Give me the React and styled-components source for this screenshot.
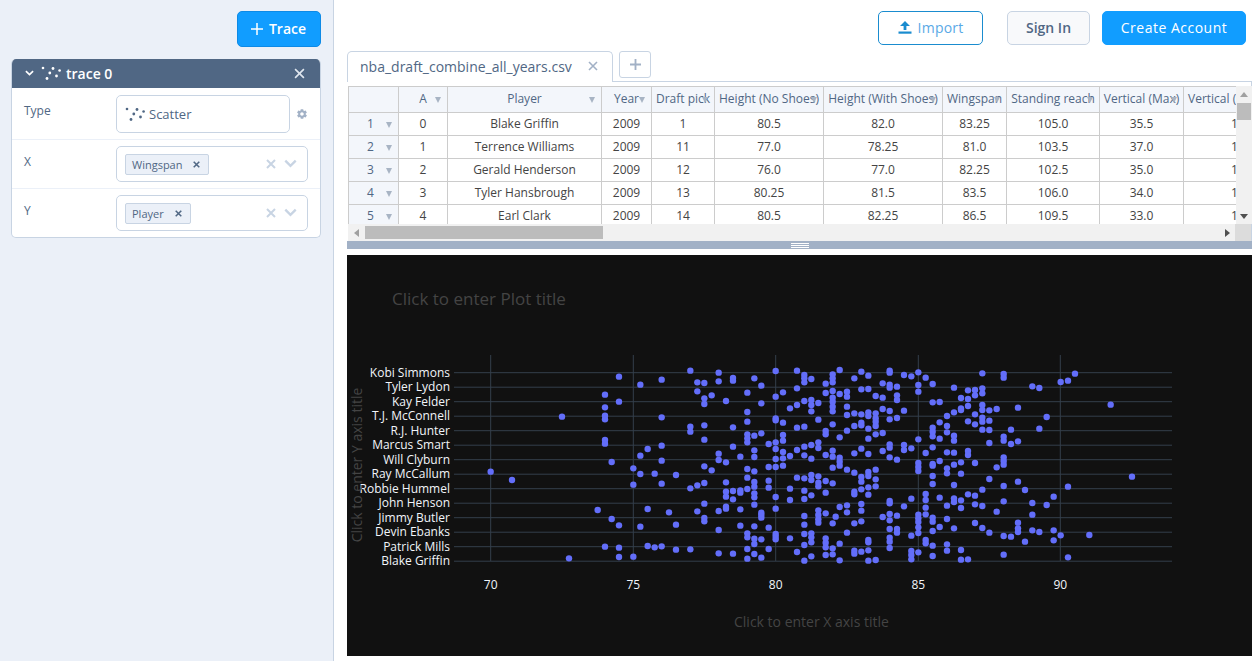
import React from "react"
import styled, { createGlobalStyle } from "styled-components"
import { IoMdSettings } from "react-icons/io"

const colors = {
  accent: "#119dff",
  slate: "#506784",
  line: "#c8d4e3",
  pale: "#ebf0f8",
  grid: "#ccc",
}

const GlobalStyle = createGlobalStyle`
  html, body {
    margin: 0;
    height: 100%;
    overflow: hidden;
    background: #fff;
    font-family: "Open Sans", "Liberation Sans", sans-serif;
  }
  * {
    box-sizing: border-box;
  }
`

const Page = styled.div`
  display: flex;
  height: 661px;
`

const Sidebar = styled.aside`
  width: 334px;
  flex: none;
  display: flex;
  flex-direction: column;
  align-items: stretch;
  padding: 11px 12px 0 11px;
  background: ${colors.pale};
  border-right: 1px solid ${colors.line};
`

const AddTrace = styled.button`
  align-self: flex-end;
  display: flex;
  align-items: center;
  justify-content: center;
  gap: 6px;
  width: 84px;
  height: 36px;
  padding: 0 1px 1px 0;
  color: #fff;
  font: 600 14px "Open Sans", sans-serif;
  background: ${colors.accent};
  border: 1px solid #0d8ae6;
  border-radius: 5px;
`

const Panel = styled.section`
  margin-top: 12px;
  background: #fff;
  border: 1px solid ${colors.line};
  border-top: 0;
  border-radius: 5px;
  overflow: hidden;
`

const PanelHead = styled.header`
  display: flex;
  align-items: center;
  height: 29px;
  margin: 0 -1px;
  padding: 0 16px 1px 14px;
  color: #fff;
  font-size: 14px;
  font-weight: 600;
  background: ${colors.slate};
`

const HeadIcon = styled.span`
  display: flex;
  margin-left: 7px;
`

const TraceName = styled.span`
  margin-left: 5px;
  flex: 1;
`

const Row = styled.div`
  display: flex;
  align-items: flex-start;
  height: ${props => props.$height}px;
  padding: ${props => props.$top}px 12px 0 12px;
  border-top: ${props => (props.$first ? "0" : `1px solid ${colors.pale}`)};
`

const Label = styled.label`
  width: 92px;
  flex: none;
  padding-top: ${props => props.$top}px;
  color: ${colors.slate};
  font-size: 12px;
`

const Field = styled.div`
  display: flex;
  align-items: center;
  flex: 1;
  height: ${props => props.$height}px;
  padding: 0 ${props => props.$right}px 0 8px;
  color: ${colors.slate};
  font-size: 13px;
  background: #fff;
  border: 1px solid ${colors.line};
  border-radius: 5px;
`

const TypeText = styled.span`
  margin-left: 4px;
`

const Gear = styled.span`
  display: flex;
  align-items: center;
  width: 18px;
  height: 38px;
  padding-left: 6px;
  color: #a2b1c6;
`

const Tag = styled.span`
  display: flex;
  align-items: center;
  height: 21px;
  padding: 0 8px 0 6px;
  gap: 11px;
  color: ${colors.slate};
  font-size: 11px;
  background: ${colors.pale};
  border: 1px solid ${colors.line};
  border-radius: 2px;
`

const Clear = styled.span`
  display: flex;
  align-items: center;
  gap: 8px;
  margin-left: auto;
`

const Main = styled.main`
  flex: 1;
  min-width: 0;
  display: flex;
  flex-direction: column;
  padding: 0 2px 0 13px;
`

const TopBar = styled.div`
  display: flex;
  justify-content: flex-end;
  height: 51px;
  padding: 11px 6px 0 0;
`

const TopButton = styled.button`
  display: flex;
  align-items: center;
  justify-content: center;
  gap: 6px;
  width: ${props => props.$width}px;
  height: 34px;
  margin-left: ${props => props.$gap}px;
  padding: 0 0 2px;
  font-family: "Open Sans", sans-serif;
  font-size: 14px;
  font-weight: ${props => (props.$kind === "plain" ? 600 : 400)};
  letter-spacing: ${props =>
    props.$kind === "solid" ? "0.5px" : props.$kind === "outline" ? "0.2px" : 0};
  border-radius: 5px;
  color: ${props =>
    props.$kind === "solid"
      ? "#fff"
      : props.$kind === "outline"
      ? "#5aa9e6"
      : colors.slate};
  background: ${props =>
    props.$kind === "solid"
      ? colors.accent
      : props.$kind === "plain"
      ? "#f8f9fb"
      : "#fff"};
  border: 1px solid
    ${props =>
      props.$kind === "plain"
        ? colors.line
        : props.$kind === "outline"
        ? "#1a8ccf"
        : colors.accent};
`

const TabRow = styled.div`
  display: flex;
  align-items: flex-start;
  height: 31px;
  border-bottom: 1px solid ${colors.line};
`

const Tab = styled.div`
  display: flex;
  align-items: center;
  justify-content: space-between;
  width: 266px;
  height: 31px;
  padding: 0 14px 2px 12px;
  color: ${colors.slate};
  font-size: 14px;
  background: #fff;
  border: 1px solid ${colors.line};
  border-bottom: 0;
  border-radius: 5px 5px 0 0;
`

const AddTab = styled.div`
  display: flex;
  align-items: center;
  justify-content: center;
  width: 32px;
  height: 27px;
  margin-left: 6px;
  background: #fff;
  border: 1px solid ${colors.line};
  border-radius: 3px;
`

const Sheet = styled.div`
  height: 159px;
  padding: 4px 0 0 1px;
  border-right: 1px solid ${colors.line};
  background: #fff;
`

const SheetTop = styled.div`
  display: flex;
  height: 138px;
`

const Viewport = styled.div`
  width: 888px;
  flex: none;
  overflow: hidden;
`

const Grid = styled.table`
  width: 888px;
  table-layout: fixed;
  border-collapse: collapse;
`

const Col = styled.col`
  width: ${props => props.$width}px;
`

const Th = styled.th`
  position: relative;
  height: 26px;
  padding: ${props => (props.$clip ? "0 0 2px 4px" : "0 0 2px")};
  overflow: hidden;
  color: ${colors.slate};
  font-size: 12px;
  font-weight: 400;
  text-align: ${props => (props.$clip ? "left" : "center")};
  white-space: nowrap;
  background: #f3f6fb;
  border: 1px solid ${colors.grid};
`

const Td = styled.td`
  height: 23px;
  padding: ${props => (props.$clip ? "0 0 2px 47px" : "0 0 2px")};
  overflow: hidden;
  color: #444;
  font-size: 12px;
  text-align: ${props => (props.$clip ? "left" : "center")};
  white-space: nowrap;
  border: 1px solid ${colors.grid};
`

const RowHead = styled.td`
  position: relative;
  height: 23px;
  padding: 0 0 2px 18px;
  color: ${colors.slate};
  font-size: 12px;
  background: #f3f6fb;
  border: 1px solid ${colors.grid};
`

const SortArrow = styled.i`
  position: absolute;
  top: ${props => props.$top}px;
  right: 6px;
  width: 0;
  height: 0;
  border-left: 3.5px solid transparent;
  border-right: 3.5px solid transparent;
  border-top: 6px solid #a8b4c4;
`

const VScroll = styled.div`
  width: 16px;
  flex: none;
  display: flex;
  flex-direction: column;
  align-items: center;
  background: #f1f1f1;
`

const ScrollCap = styled.div`
  display: flex;
  align-items: center;
  justify-content: center;
  flex: none;
  width: 100%;
  height: ${props => props.$size}px;
  margin-top: ${props => props.$auto || 0};
`

const VThumb = styled.div`
  width: 14px;
  height: 17px;
  background: #bcbcbc;
`

const HScroll = styled.div`
  display: flex;
  align-items: center;
  height: 17px;
  background: #f1f1f1;
`

const HCap = styled.div`
  width: 17px;
  flex: none;
  display: flex;
  align-items: center;
  justify-content: center;
  margin-left: ${props => props.$auto || 0};
`

const HThumb = styled.div`
  width: 238px;
  height: 13px;
  background: #bcbcbc;
`

const Corner = styled.div`
  width: 16px;
  height: 17px;
  flex: none;
  background: #dcdcdc;
`

const Divider = styled.div`
  display: flex;
  flex-direction: column;
  align-items: center;
  justify-content: center;
  gap: 1px;
  height: 8px;
  margin-bottom: 6px;
  background: #a2b1c6;
`

const Grip = styled.span`
  width: 18px;
  height: 1px;
  background: #fff;
`

const PlotBox = styled.div`
  height: 401px;
  background: #111;
`

const Plot = styled.svg`
  display: block;
  font-family: "Open Sans", sans-serif;
`

const Chevron = ({ color = "#fff", size = 10 }) => (
  <svg width={size} height={size * 0.7} viewBox="0 0 10 7" fill="none">
    <path d="M1 1.2 5 5.2 9 1.2" stroke={color} strokeWidth="1.8" />
  </svg>
)

const Cross = ({ color = "#fff", size = 11, weight = 1.5 }) => (
  <svg width={size} height={size} viewBox="0 0 10 10" fill="none">
    <path d="M1 1 9 9M9 1 1 9" stroke={color} strokeWidth={weight} />
  </svg>
)

const Plus = ({ color = "#fff", size = 11, weight = 1.5 }) => (
  <svg width={size} height={size} viewBox="0 0 12 12" fill="none">
    <path d="M6 0V12M0 6H12" stroke={color} strokeWidth={weight} />
  </svg>
)

const ScatterIcon = ({ color }) => (
  <svg width="20" height="14" viewBox="0 0 20 14" fill={color}>
    <circle cx="2" cy="2" r="1.3" />
    <circle cx="6" cy="12.5" r="1.4" />
    <circle cx="8.8" cy="7" r="1.4" />
    <circle cx="12" cy="2.5" r="1.4" />
    <circle cx="15.5" cy="10" r="1.4" />
    <circle cx="18.6" cy="4.5" r="1.3" />
  </svg>
)

const UploadIcon = () => (
  <svg width="14" height="13" viewBox="0 0 14 13" fill="#1a8ccf">
    <path d="M7 0 12 5H8.4V9H5.6V5H2Z" />
    <rect x="0.5" y="10.5" width="13" height="2.2" />
  </svg>
)

const Triangle = ({ dir, color = "#666" }) => {
  const shapes = {
    up: "M0 6 4 1 8 6Z",
    down: "M0 2 8 2 4 7Z",
    left: "M6 0 6 8 1 4Z",
    right: "M2 0 7 4 2 8Z",
  }
  return (
    <svg width="8" height="8" viewBox="0 0 8 8" fill={color}>
      <path d={shapes[dir]} />
    </svg>
  )
}

const columnWidths = [50, 49, 154, 50, 63, 109, 119, 64, 93, 84, 53]

const headers = [
  "A",
  "Player",
  "Year",
  "Draft pick",
  "Height (No Shoes)",
  "Height (With Shoes)",
  "Wingspan",
  "Standing reach",
  "Vertical (Max)",
]

const rows = [
  [0, "Blake Griffin", 2009, 1, "80.5", "82.0", "83.25", "105.0", "35.5"],
  [1, "Terrence Williams", 2009, 11, "77.0", "78.25", "81.0", "103.5", "37.0"],
  [2, "Gerald Henderson", 2009, 12, "76.0", "77.0", "82.25", "102.5", "35.0"],
  [3, "Tyler Hansbrough", 2009, 13, "80.25", "81.5", "83.5", "106.0", "34.0"],
  [4, "Earl Clark", 2009, 14, "80.5", "82.25", "86.5", "109.5", "33.0"],
]

const xTicks = [
  [490.7, 70],
  [633.3, 75],
  [775.7, 80],
  [918.3, 85],
  [1060.3, 90],
]

const players = [
  "Kobi Simmons",
  "Tyler Lydon",
  "Kay Felder",
  "T.J. McConnell",
  "R.J. Hunter",
  "Marcus Smart",
  "Will Clyburn",
  "Ray McCallum",
  "Robbie Hummel",
  "John Henson",
  "Jimmy Butler",
  "Devin Ebanks",
  "Patrick Mills",
  "Blake Griffin",
]

// read off the screenshot at 3x, left and right half of the plot
const leftDots = [
  [1036,62],[1121,68],[822,80],[950,89],[1164,84],[1164,92],[1228,85],[1057,97],[1078,99],[1121,94],[886,104],[1249,107],
  [780,134],[1057,124],[1100,136],[1078,145],[1207,128],[822,155],[1143,153],[1078,162],[1249,160],
  [780,172],[1207,186],[651,200],[780,197],[780,208],[950,202],[1207,215],
  [1036,230],[1036,245],[1078,226],[1164,232],[1207,253],[1228,257],[1249,250],[1207,265],[1207,277],[780,270],[780,281],[1078,269],
  [950,287],[908,297],[1164,290],[1228,301],[886,317],[1121,311],[1121,330],[1143,337],[1186,320],[1228,321],[800,336],[950,332],
  [1078,349],[1100,361],[1207,357],[1228,364],[865,355],[886,372],[929,371],[993,375],[437,365],[501,390],[1207,383],
  [865,404],[950,401],[1036,415],[1057,406],[1078,399],[1143,397],[1228,396],[1228,410],[1207,417],[1186,421],[1186,428],[1164,423],[1143,425],[1143,440],[1228,430],[1228,442],[1164,448],
  [1078,461],[1228,464],[758,480],[908,477],[972,487],[1057,484],[1121,483],[1143,470],[1143,476],[1186,478],[1249,488],[1249,495],[1249,503],[800,507],[1078,504],[1078,514],
  [822,526],[886,530],[993,524],[1186,527],[1228,529],[1121,540],[1207,550],[1207,562],[1228,566],[1249,568],[1228,582],
  [780,590],[822,593],[908,588],[929,592],[950,589],[993,599],[1036,598],[1207,597],[1121,610],[1164,611],[1228,612],
  [672,625],[822,621],[865,620],[1207,626],[1249,623],
]

const rightDots = [
  [47,63],[111,62],[133,75],[133,85],[133,97],[154,87],[218,73],[218,85],[218,97],[239,60],[283,85],[304,65],[325,77],[389,62],[389,68],[432,75],[454,79],[475,67],[497,83],[667,70],[731,72],[731,83],[945,71],[924,92],[902,96],
  [197,101],[368,100],[389,104],[389,113],[411,110],[475,105],[518,102],[582,113],[624,121],[645,120],[645,136],[667,115],[667,130],[817,109],[838,114],
  [111,115],[69,127],[47,140],[197,129],[218,123],[239,132],[261,125],[261,140],[304,118],[325,117],[347,138],[368,143],[411,136],[411,150],[475,125],[603,144],[624,147],
  [133,153],[111,165],[90,175],[154,150],[154,165],[175,159],[218,143],[218,155],[218,170],[154,184],[218,184],[261,170],[261,195],[283,190],[304,193],[325,187],[325,198],[347,190],[368,177],[389,183],[432,182],[518,157],[539,156],[603,175],[603,180],[624,168],[667,165],[667,180],[688,181],[710,177],[774,173],[1052,164],
  [47,205],[47,211],[69,218],[175,209],[218,223],[347,205],[347,215],[347,228],[304,218],[304,226],[283,228],[389,208],[411,204],[561,198],[582,187],[645,193],[667,203],[667,215],[688,212],[624,214],[645,223],[539,217],[561,228],[860,201],
  [111,233],[133,230],[197,243],[197,253],[261,242],[325,236],[368,249],[347,253],[518,233],[518,245],[518,259],[561,247],[582,257],[582,272],[539,266],[667,239],[688,240],[753,239],[838,236],
  [69,255],[69,272],[47,277],[26,282],[239,262],[325,266],[475,268],[175,277],[175,294],[154,285],[133,290],[47,297],[69,306],[111,300],[90,318],[133,316],[154,326],[47,327],[69,325],
  [197,315],[218,302],[218,320],[239,323],[239,335],[239,347],[283,310],[304,296],[325,312],[368,303],[389,283],[389,293],[432,285],[432,300],[454,295],[518,292],[497,309],[561,307],[582,308],[624,303],[624,315],[688,279],[731,260],[731,272],[753,282],[774,274],
  [389,322],[411,329],[475,339],[475,351],[475,363],[518,342],[518,347],[539,333],[561,355],[561,370],[582,344],[603,337],[645,339],[731,322],[731,333],[731,344],[710,352],
  [26,351],[47,351],[69,347],[218,353],[261,359],[283,368],[347,359],[325,366],[325,378],[304,381],[304,395],[347,388],
  [111,383],[133,385],[154,375],[154,390],[175,379],[197,393],[26,392],[175,398],[175,409],[218,400],[518,378],[603,371],[688,387],[774,395],[1116,380],
  [26,413],[90,416],[133,422],[154,436],[133,447],[90,450],[47,441],[197,428],[283,425],[283,433],[304,418],[325,412],[347,409],[325,434],[518,402],[582,405],[731,408],[667,419],[795,420],[924,410],
  [389,453],[389,460],[454,446],[497,432],[497,450],[539,443],[582,445],[582,456],[603,451],[624,433],[645,437],[881,440],[731,454],[817,459],[860,465],
  [47,476],[261,466],[239,471],[304,462],[304,482],[261,487],[432,469],[497,473],[561,467],[603,474],[645,463],[667,468],[710,485],
  [133,498],[175,481],[175,495],[175,508],[175,518],[197,490],[227,500],[218,520],[133,524],[283,520],[304,514],[368,501],[389,492],[389,511],[411,497],[475,494],[475,505],[475,516],[497,493],[518,503],[518,515],[561,507],[817,494],
  [26,533],[261,548],[389,537],[411,537],[411,548],[475,532],[475,549],[454,557],[518,543],[539,531],[582,535],[645,519],[667,534],[688,548],[774,518],[774,535],[774,546],[817,541],[838,546],[881,541],[902,556],[988,555],[731,558],[753,560],
  [47,552],[47,560],[47,568],[90,565],[133,552],[154,550],[154,562],[154,577],[133,585],[197,565],[197,578],[197,592],[239,581],[325,570],[325,577],[389,563],[389,575],[497,570],[497,580],[518,587],[561,583],[795,575],[881,571],
  [26,597],[111,606],[154,619],[133,632],[197,615],[218,595],[218,613],[239,631],[283,602],[283,611],[304,605],[325,601],[325,632],[347,630],[389,594],[454,603],[454,615],[454,628],[475,607],[518,618],[561,602],[603,600],[603,629],[624,628],[731,614],[924,622],
]

const dots = [
  ...leftDots.map(([x, y]) => [x / 3 + 345, y / 3 + 350]),
  ...rightDots.map(([x, y]) => [x / 3 + 760, y / 3 + 350]),
]

const ScatterPlot = () => (
  <Plot width="905" height="401" viewBox="347 255 905 401">
    <text x="392" y="305" fontSize="17" fill="#444">
      Click to enter Plot title
    </text>
    {xTicks.map(([x]) => (
      <line key={x} x1={x} x2={x} y1="355" y2="561" stroke="#343f4c" />
    ))}
    {players.map((name, i) => {
      const y = 372.7 + i * 14.5
      return (
        <g key={name}>
          <line x1="454" x2="1172" y1={y} y2={y} stroke="#343f4c" />
          <text x="450" y={y + 4} fontSize="12" textAnchor="end" fill="#f2f5fa">
            {name}
          </text>
        </g>
      )
    })}
    {xTicks.map(([x, label]) => (
      <text key={label} x={x} y="589" fontSize="12" textAnchor="middle" fill="#f2f5fa">
        {label}
      </text>
    ))}
    {dots.map(([x, y]) => (
      <circle key={`${x}-${y}`} cx={x} cy={y} r="3.2" fill="#636efa" />
    ))}
    <text x="734" y="627" fontSize="14" fill="#444">
      Click to enter X axis title
    </text>
    <text
      x="358"
      y="465"
      fontSize="14"
      textAnchor="middle"
      fill="#444"
      transform="rotate(-90 358 465)"
      dominantBaseline="middle"
    >
      Click to enter Y axis title
    </text>
  </Plot>
)

const SelectRow = ({ label, tag, first }) => (
  <Row $height={49} $top={6} $first={first}>
    <Label $top={7}>{label}</Label>
    <Field $height={36} $right={10}>
      <Tag>
        {tag}
        <Cross color={colors.slate} size={7} weight={2.2} />
      </Tag>
      <Clear>
        <Cross color={colors.line} size={10} weight={2} />
        <Chevron color={colors.line} size={13} />
      </Clear>
    </Field>
  </Row>
)

const App = () => (
  <Page>
    <GlobalStyle />
    <Sidebar>
      <AddTrace>
        <Plus size={12} />
        Trace
      </AddTrace>
      <Panel>
        <PanelHead>
          <Chevron size={9} />
          <HeadIcon>
            <ScatterIcon color="#fff" />
          </HeadIcon>
          <TraceName>trace 0</TraceName>
          <Cross size={11} color="#dfe6ee" />
        </PanelHead>
        <Row $height={51} $top={7} $first>
          <Label $top={7}>Type</Label>
          <Field $height={38} $right={8}>
            <ScatterIcon color={colors.slate} />
            <TypeText>Scatter</TypeText>
          </Field>
          <Gear>
            <IoMdSettings size={12} />
          </Gear>
        </Row>
        <SelectRow label="X" tag="Wingspan" />
        <SelectRow label="Y" tag="Player" />
      </Panel>
    </Sidebar>
    <Main>
      <TopBar>
        <TopButton $kind="outline" $width={105}>
          <UploadIcon />
          Import
        </TopButton>
        <TopButton $kind="plain" $width={83} $gap={24}>
          Sign In
        </TopButton>
        <TopButton $kind="solid" $width={144} $gap={12}>
          Create Account
        </TopButton>
      </TopBar>
      <TabRow>
        <Tab>
          nba_draft_combine_all_years.csv
          <Cross color="#a2b1c6" size={10} weight={1.6} />
        </Tab>
        <AddTab>
          <Plus color="#a2b1c6" size={11} weight={2} />
        </AddTab>
      </TabRow>
      <Sheet>
        <SheetTop>
          <Viewport>
            <Grid>
              <colgroup>
                {columnWidths.map((width, i) => (
                  <Col key={i} $width={width} />
                ))}
              </colgroup>
              <thead>
                <tr>
                  <Th />
                  {headers.map(label => (
                    <Th key={label}>
                      {label}
                      <SortArrow $top={10} />
                    </Th>
                  ))}
                  <Th $clip>Vertical (</Th>
                </tr>
              </thead>
              <tbody>
                {rows.map((row, i) => (
                  <tr key={row[1]}>
                    <RowHead>
                      {i + 1}
                      <SortArrow $top={9} />
                    </RowHead>
                    {row.map((value, j) => (
                      <Td key={j}>{value}</Td>
                    ))}
                    <Td $clip>1</Td>
                  </tr>
                ))}
              </tbody>
            </Grid>
          </Viewport>
          <VScroll>
            <ScrollCap $size={17}>
              <Triangle dir="up" color="#a0a0a0" />
            </ScrollCap>
            <VThumb />
            <ScrollCap $size={17} $auto="auto">
              <Triangle dir="down" color="#505050" />
            </ScrollCap>
          </VScroll>
        </SheetTop>
        <HScroll>
          <HCap>
            <Triangle dir="left" color="#a0a0a0" />
          </HCap>
          <HThumb />
          <HCap $auto="auto">
            <Triangle dir="right" color="#505050" />
          </HCap>
          <Corner />
        </HScroll>
      </Sheet>
      <Divider>
        <Grip />
        <Grip />
        <Grip />
      </Divider>
      <PlotBox>
        <ScatterPlot />
      </PlotBox>
    </Main>
  </Page>
)

export default App
